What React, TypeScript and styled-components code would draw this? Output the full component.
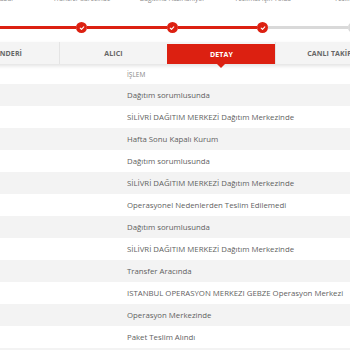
import React, { FC } from 'react'
import styled, { createGlobalStyle } from 'styled-components'

const RED = '#dc2011'

const GlobalStyle = createGlobalStyle`
  html, body {
    margin: 0;
    padding: 0;
    overflow: hidden;
    background: #fff;
    font-family: "Open Sans", "Liberation Sans", sans-serif;
  }
`

type Step = { title: string; sub: string; done: boolean; lineDone: boolean }

const steps: Step[] = [
  { title: 'Gönderi Kabul', sub: 'BIRAK', done: true, lineDone: true },
  { title: 'Transfer Sürecinde', sub: '', done: true, lineDone: true },
  { title: 'Dağıtıma Hazırlanıyor', sub: '', done: true, lineDone: true },
  { title: 'Teslimat İçin Yolda', sub: '', done: true, lineDone: false },
  { title: 'Teslim Edildi', sub: '', done: false, lineDone: false },
]

const tabs = ['GÖNDERİ', 'ALICI', 'DETAY', 'CANLI TAKİP']

const rows = [
  'Dağıtım sorumlusunda',
  'SİLİVRİ DAĞITIM MERKEZİ Dağıtım Merkezinde',
  'Hafta Sonu Kapalı Kurum',
  'Dağıtım sorumlusunda',
  'SİLİVRİ DAĞITIM MERKEZİ Dağıtım Merkezinde',
  'Operasyonel Nedenlerden Teslim Edilemedi',
  'Dağıtım sorumlusunda',
  'SİLİVRİ DAĞITIM MERKEZİ Dağıtım Merkezinde',
  'Transfer Aracında',
  'ISTANBUL OPERASYON MERKEZI GEBZE Operasyon Merkezi',
  'Operasyon Merkezinde',
  'Paket Teslim Alındı',
]

const Check: FC = () => (
  <svg width="6" height="6" viewBox="0 0 10 10" fill="none">
    <path d="M2 5.2 L4.2 7.3 L8 3" stroke="#fff" strokeWidth="1.8" strokeLinecap="round" strokeLinejoin="round" />
  </svg>
)

const App: FC = (): JSX.Element => {
  return (
    <Page>
      <GlobalStyle />
      <StepsRow>
        {steps.map((s, i) => (
          <StepCol key={i}>
            <StepLabel>
              <span>{s.title}</span>
              <StepSub>{s.sub}</StepSub>
            </StepLabel>
            <Track>
              <Segment done={s.done} />
              <Dot done={s.done}>{s.done && <Check />}</Dot>
              <Segment done={s.lineDone} />
            </Track>
          </StepCol>
        ))}
      </StepsRow>

      <Wide>
        <TabBar>
          {tabs.map((t) => (
            <Tab key={t} active={t === 'DETAY'}>
              {t}
            </Tab>
          ))}
        </TabBar>

        <Table>
          <HeadRow>
            <Cell />
            <HeadCell>İŞLEM</HeadCell>
          </HeadRow>
          {rows.map((r, i) => (
            <Row key={i} striped={i % 2 === 0}>
              <Cell />
              <Cell>{r}</Cell>
            </Row>
          ))}
          <Row striped>
            <Cell />
            <Cell />
          </Row>
        </Table>
      </Wide>
    </Page>
  )
}

export default App

const Page = styled.div`
  width: 350px;
  height: 350px;
  overflow: hidden;
`

const StepsRow = styled.div`
  display: grid;
  grid-template-columns: repeat(5, 90.5px);
  margin-left: -54px;
  margin-top: -6px;
  height: 48px;
`

const StepCol = styled.div`
  display: flex;
  flex-direction: column;
  align-items: center;
`

const StepLabel = styled.div`
  height: 28px;
  box-sizing: border-box;
  padding-top: 1px;
  display: flex;
  flex-direction: column;
  align-items: center;
  font-size: 6.5px;
  line-height: 7px;
  color: #888;
  white-space: nowrap;
  text-align: center;
`

const StepSub = styled.span`
  color: #444;
  align-self: flex-end;
  padding-right: 38px;
`

const Track = styled.div`
  width: 100%;
  height: 11px;
  display: flex;
  align-items: center;
`

const Segment = styled.div<{ done: boolean }>`
  flex: 1;
  height: 3px;
  background: ${(p) => (p.done ? RED : '#d9d9d9')};
`

const Dot = styled.div<{ done: boolean }>`
  width: 11px;
  height: 11px;
  border-radius: 50%;
  background: ${(p) => (p.done ? RED : '#d9d9d9')};
  display: flex;
  align-items: center;
  justify-content: center;
  flex-shrink: 0;
`

const Wide = styled.div`
  width: 432px;
  margin-left: -49px;
`

const TabBar = styled.div`
  display: grid;
  grid-template-columns: repeat(4, 108px);
  height: 22px;
  background: #f4f4f4;
  box-shadow: 0 2px 4px rgba(0, 0, 0, 0.12);
  position: relative;
  z-index: 1;
`

const Tab = styled.div<{ active: boolean }>`
  position: relative;
  display: flex;
  align-items: center;
  justify-content: center;
  font-size: 7px;
  font-weight: 700;
  letter-spacing: 0.1px;
  color: ${(p) => (p.active ? '#fff' : '#666')};
  background: ${(p) => (p.active ? RED : 'transparent')};
  margin-top: ${(p) => (p.active ? '2px' : '0')};
  border-left: 1px solid ${(p) => (p.active ? RED : '#e4e4e4')};

  &::after {
    content: '';
    display: ${(p) => (p.active ? 'block' : 'none')};
    position: absolute;
    left: 50%;
    bottom: -4px;
    margin-left: -5px;
    border-left: 4px solid transparent;
    border-right: 4px solid transparent;
    border-top: 4px solid ${RED};
  }
`

const Table = styled.div`
  display: flex;
  flex-direction: column;
`

const Row = styled.div<{ striped?: boolean }>`
  display: grid;
  grid-template-columns: 176px 1fr;
  height: 22px;
  align-items: center;
  background: ${(p) => (p.striped ? '#f3f3f3' : '#fff')};
`

const HeadRow = styled(Row)`
  height: 19px;
  padding-top: 1px;
`

const Cell = styled.div`
  font-size: 7.8px;
  color: #5f5f5f;
  white-space: nowrap;
`

const HeadCell = styled(Cell)`
  font-size: 6.5px;
  color: #888;
`
